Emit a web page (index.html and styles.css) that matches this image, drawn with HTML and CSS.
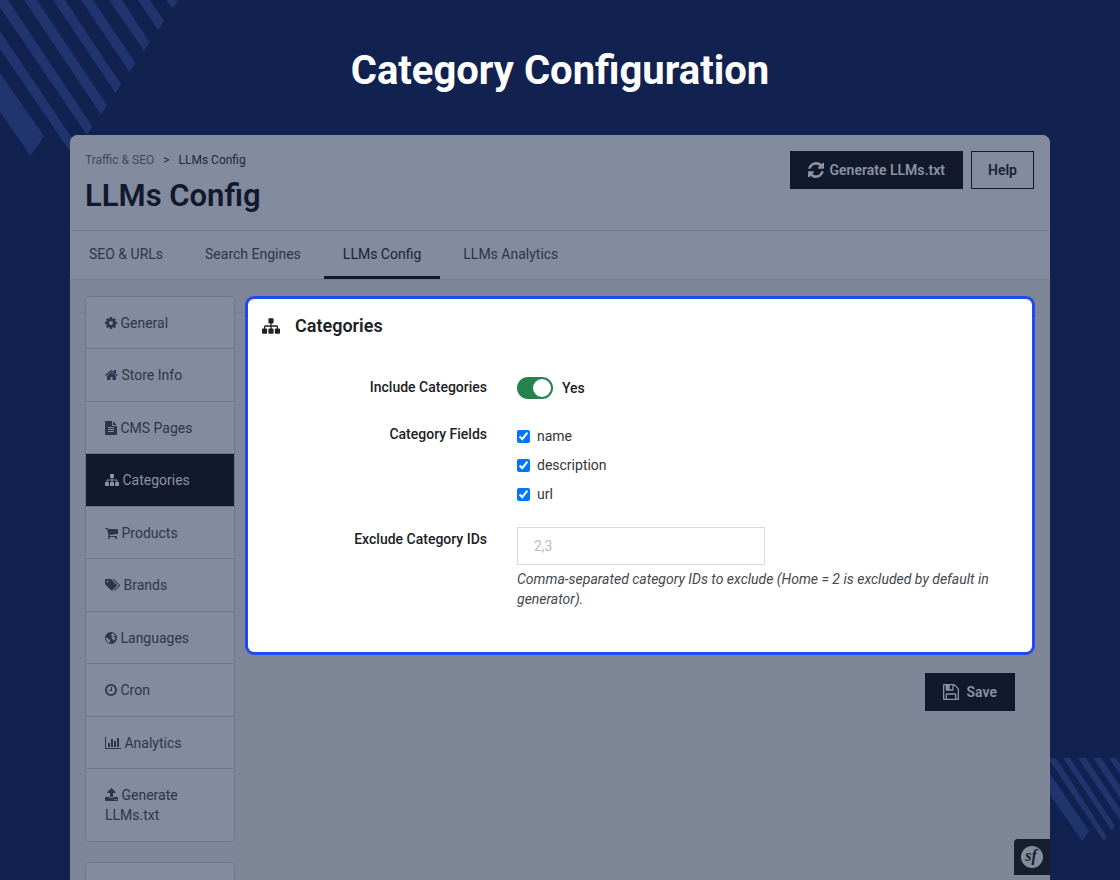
FILE: index.html
```html
<!DOCTYPE html>
<html lang="en">
<head>
    <meta charset="UTF-8">
    <meta name="viewport" content="width=device-width, initial-scale=1.0">
    <title>Category Configuration</title>
    <link rel="stylesheet" href="styles.css">
</head>
<body>
    <svg class="stripes stripes-top" width="180" height="160" viewBox="0 0 180 160" aria-hidden="true">
        <path d="M0 73L44 136 30.500 156 0 112zM0 31L78 147 73 156 0 49zM-3 0H8L92.500 126.500 87 135-3 3zM24 0H37L107 105 101 114.500zM53 0H65L121 84.500 115.500 93zM81 0H93L135.500 63 129.500 72zM109 0H122L149.500 42 144 51zM138 0H150L164 21 158 30zM166 0H178L173 9z"/>
    </svg>
    <svg class="stripes stripes-bottom" width="70" height="84" viewBox="0 0 70 84" aria-hidden="true">
        <path d="M0 16L39 73 32 83 0 37zM0 0H6L57 79 54 83 0 3zM13 0H20L65 68 62 73zM28 0H36L70 51V62zM43 0H51L70 28V40zM59 0H66L70 6V16z"/>
    </svg>

    <h1 class="page-title">Category Configuration</h1>

    <div class="window">
        <header class="header">
            <div>
                <nav class="breadcrumb">
                    <a href="#">Traffic &amp; SEO</a>
                    <span>&gt;</span>
                    <a href="#" class="current">LLMs Config</a>
                </nav>
                <h2>LLMs Config</h2>
            </div>
            <div class="toolbar">
                <button class="btn btn-dark" type="button">
                    <svg class="icon icon-btn" viewBox="128 128 1536 1536"><path d="M1639 1056q0 5-1 7-64 268-268 434.500t-478 166.500q-146 0-282.500-55t-243.500-157l-129 129q-19 19-45 19t-45-19-19-45v-448q0-26 19-45t45-19h448q26 0 45 19t19 45-19 45l-137 137q71 66 161 102t187 36q134 0 250-65t186-179q11-17 53-117 8-23 30-23h192q13 0 22.500 9.500t9.500 22.500zm25-800v448q0 26-19 45t-45 19h-448q-26 0-45-19t-19-45 19-45l138-138q-148-137-349-137-134 0-250 65t-186 179q-11 17-53 117-8 23-30 23h-199q-13 0-22.500-9.500t-9.500-22.500v-7q65-268 270-434.500t480-166.500q146 0 284 55.500t245 156.500l130-129q19-19 45-19t45 19 19 45z"/></svg>
                    Generate LLMs.txt
                </button>
                <button class="btn btn-outline" type="button">Help</button>
            </div>
        </header>

        <nav class="tabs">
            <a href="#">SEO &amp; URLs</a>
            <a href="#">Search Engines</a>
            <a href="#" class="active">LLMs Config</a>
            <a href="#">LLMs Analytics</a>
        </nav>

        <div class="content">
            <aside class="sidebar">
                <nav class="menu">
                    <a href="#"><svg class="icon" viewBox="128 0 1536 1792"><path d="M1152 896q0-106-75-181t-181-75-181 75-75 181 75 181 181 75 181-75 75-181zm512-109v222q0 12-8 23t-20 13l-185 28q-19 54-39 91 35 50 107 138 10 12 10 25t-9 23q-27 37-99 108t-94 71q-12 0-26-9l-138-108q-44 23-91 38-16 136-29 186-7 28-36 28h-222q-14 0-24.500-8.500t-11.500-21.500l-28-184q-49-16-90-37l-141 107q-10 9-25 9-14 0-25-11-126-114-165-168-7-10-7-23 0-12 8-23 15-21 51-66.500t54-70.500q-27-50-41-99l-183-27q-13-2-21-12.500t-8-23.500v-222q0-12 8-23t19-13l186-28q14-46 39-92-40-57-107-138-10-12-10-24 0-10 9-23 26-36 98.500-107.500t94.500-71.500q13 0 26 10l138 107q44-23 91-38 16-136 29-186 7-28 36-28h222q14 0 24.500 8.500t11.500 21.500l28 184q49 16 90 37l142-107q9-9 24-9 13 0 25 10 129 119 165 170 7 8 7 22 0 12-8 23-15 21-51 66.500t-54 70.500q26 50 41 98l183 28q13 2 21 12.500t8 23.500z"/></svg> General</a>
                    <a href="#"><svg class="icon" viewBox="64 0 1664 1792"><path d="M1472 992v480q0 26-19 45t-45 19h-384v-384h-256v384h-384q-26 0-45-19t-19-45v-480q0-1 .5-3t.5-3l575-474 575 474q1 2 1 6zm223-69l-62 74q-8 9-21 11h-3q-13 0-21-7l-692-577-692 577q-12 8-24 7-13-2-21-11l-62-74q-8-10-7-23.500t11-21.500l719-599q32-26 76-26t76 26l244 204v-195q0-14 9-23t23-9h192q14 0 23 9t9 23v408l219 182q10 8 11 21.500t-7 23.500z"/></svg> Store Info</a>
                    <a href="#"><svg class="icon" viewBox="128 0 1536 1792"><path d="M1596 476q14 14 28 36h-472v-472q22 14 36 28zm-476 164h544v1056q0 40-28 68t-68 28h-1344q-40 0-68-28t-28-68v-1600q0-40 28-68t68-28h800v544q0 40 28 68t68 28zm160 736v-64q0-14-9-23t-23-9h-704q-14 0-23 9t-9 23v64q0 14 9 23t23 9h704q14 0 23-9t9-23zm0-256v-64q0-14-9-23t-23-9h-704q-14 0-23 9t-9 23v64q0 14 9 23t23 9h704q14 0 23-9t9-23zm0-256v-64q0-14-9-23t-23-9h-704q-14 0-23 9t-9 23v64q0 14 9 23t23 9h704q14 0 23-9t9-23z"/></svg> CMS Pages</a>
                    <a href="#" class="active"><svg class="icon" viewBox="0 0 1792 1792"><path id="sitemap" d="M1792 1248v320q0 40-28 68t-68 28h-320q-40 0-68-28t-28-68v-320q0-40 28-68t68-28h96v-192h-512v192h96q40 0 68 28t28 68v320q0 40-28 68t-68 28h-320q-40 0-68-28t-28-68v-320q0-40 28-68t68-28h96v-192h-512v192h96q40 0 68 28t28 68v320q0 40-28 68t-68 28h-320q-40 0-68-28t-28-68v-320q0-40 28-68t68-28h96v-192q0-52 38-90t90-38h512v-192h-96q-40 0-68-28t-28-68v-320q0-40 28-68t68-28h320q40 0 68 28t28 68v320q0 40-28 68t-68 28h-96v192h512q52 0 90 38t38 90v192h96q40 0 68 28t28 68z"/></svg> Categories</a>
                    <a href="#"><svg class="icon" viewBox="64 0 1664 1792"><path d="M704 1536q0 52-38 90t-90 38-90-38-38-90 38-90 90-38 90 38 38 90zm896 0q0 52-38 90t-90 38-90-38-38-90 38-90 90-38 90 38 38 90zm128-1088v512q0 24-16.500 42.500t-40.500 21.500l-1044 122q13 60 13 70 0 16-24 64h920q26 0 45 19t19 45-19 45-45 19h-1024q-26 0-45-19t-19-45q0-11 8-31.500t16-36 21.500-40 15.500-29.500l-177-823h-204q-26 0-45-19t-19-45 19-45 45-19h256q16 0 28.500 6.500t19.500 15.500 13 24.500 8 26 5.500 29.500 4.500 26h1201q26 0 45 19t19 45z"/></svg> Products</a>
                    <a href="#"><svg class="icon" viewBox="0 0 15 14"><path fill-rule="evenodd" d="M0 2Q0 1 1 1H5.200Q6 1 6.700 1.700L11.700 6.700Q12.300 7.400 11.700 8.100L7.600 12.300Q6.900 12.900 6.200 12.300L.7 6.900Q0 6.200 0 5.400zM2.500 2.500a1 1 0 1 0 0 2 1 1 0 0 0 0-2zM7 1H8.200Q9 1 9.700 1.700L14.700 6.700Q15.300 7.400 14.700 8.100L10.600 12.300Q9.800 12.900 9.100 12.200L13.300 8.100Q13.900 7.400 13.300 6.800L8 1.500z"/></svg> Brands</a>
                    <a href="#"><svg class="icon" viewBox="0 0 12 14"><path fill-rule="evenodd" d="M6 1a6 6 0 1 0 0 12A6 6 0 0 0 6 1zM7.300 2.200Q9.500 2.800 10.600 4.700L9.300 5.200 8.600 4.800 8 5.500 9.200 6 10.400 6.200 10 8.300 9 9.600 8.100 9.300 7.900 8.200 6.800 7.600 6.600 6.300 7.200 5.200 7 4.400 6.100 4.800 5.700 4 6.700 3.200zM1.300 6.300L2.800 7.400 4.300 8.200 5.300 9.200 4.800 10.300 4.600 12Q1.500 11 1.100 7.400z"/></svg> Languages</a>
                    <a href="#"><svg class="icon" viewBox="0 0 12 14"><path fill-rule="evenodd" d="M6 1a6 6 0 1 0 0 12A6 6 0 0 0 6 1zM6 2.800a4.200 4.200 0 1 1 0 8.400 4.200 4.200 0 0 1 0-8.400zM6 4H7V7.700Q7 8 6.700 8H4.200Q4 8 4 7.700V7H6z"/></svg> Cron</a>
                    <a href="#"><svg class="icon" viewBox="0 0 16 14"><path d="M0 1H1V12H16V13H0zM3 7H5V11H3zM6 3H8V11H6zM9 5H11V11H9zM12 2H14V11H12z"/></svg> Analytics</a>
                    <a href="#" class="tall"><svg class="icon" viewBox="0 0 13 14"><path fill-rule="evenodd" d="M6.500 0L10.600 4.100Q11 5 10.200 5H8V8.500Q8 9 7.500 9H5.500Q5 9 5 8.500V5H2.800Q2 5 2.400 4.100zM.8 9H4.200Q4.600 10 5.500 10H7.500Q8.400 10 8.800 9H12.200Q13 9 13 9.800V12.200Q13 13 12.200 13H.8Q0 13 0 12.200V9.800Q0 9 .8 9zM9 11v1h1v-1zM11 11v1h1v-1z"/></svg> Generate LLMs.txt</a>
                </nav>
                <div class="menu menu-next"></div>
            </aside>

            <main class="main">
                <form>
                    <section class="panel">
                        <h3>
                            <svg class="icon icon-title" viewBox="0 0 1792 1792"><use href="#sitemap"/></svg>
                            Categories
                        </h3>
                        <div class="form-row">
                            <label class="form-label" for="include">Include Categories</label>
                            <div class="switch-field">
                                <input class="switch" type="checkbox" id="include" checked>
                                <label for="include">Yes</label>
                            </div>
                        </div>
                        <div class="form-row" role="group" aria-labelledby="fields">
                            <span class="form-label" id="fields">Category Fields</span>
                            <div class="checks">
                                <label><input type="checkbox" checked> name</label>
                                <label><input type="checkbox" checked> description</label>
                                <label><input type="checkbox" checked> url</label>
                            </div>
                        </div>
                        <div class="form-row">
                            <label class="form-label" for="exclude">Exclude Category IDs</label>
                            <div>
                                <input class="text-input" type="text" id="exclude" placeholder="2,3">
                                <p class="help">Comma-separated category IDs to exclude (Home = 2 is excluded by default in generator).</p>
                            </div>
                        </div>
                    </section>
                    <div class="actions">
                        <button class="btn btn-dark btn-save" type="submit">
                            <svg class="icon icon-btn" viewBox="128 128 1536 1536"><path d="M512 1536h768v-384h-768v384zm896 0h128v-896q0-14-10-38.500t-20-34.500l-281-281q-10-10-34-20t-39-10v416q0 40-28 68t-68 28h-576q-40 0-68-28t-28-68v-416h-128v1280h128v-416q0-40 28-68t68-28h832q40 0 68 28t28 68v416zm-384-928v-320q0-13-9.500-22.500t-22.500-9.500h-192q-13 0-22.500 9.500t-9.500 22.500v320q0 13 9.500 22.500t22.500 9.500h192q13 0 22.500-9.500t9.500-22.500zm640 32v928q0 40-28 68t-68 28h-1344q-40 0-68-28t-28-68v-1344q0-40 28-68t68-28h928q40 0 88 20t76 48l280 280q28 28 48 76t20 88z"/></svg>
                            Save
                        </button>
                    </div>
                </form>
            </main>
        </div>

        <button class="debug" type="button" aria-label="Debug toolbar">
            <svg width="22" height="22" viewBox="0 0 22 22">
                <circle cx="11" cy="11" r="11"/>
                <text x="10" y="15" text-anchor="middle">sf</text>
            </svg>
        </button>
    </div>
</body>
</html>
```
FILE: styles.css
```css
* {
    margin: 0;
    padding: 0;
    box-sizing: border-box;
}

body {
    height: 100vh;
    overflow: hidden;
    position: relative;
    display: flex;
    flex-direction: column;
    background-color: #112150;
    color: #2f364b;
    font-family: Roboto, "Liberation Sans", sans-serif;
    font-size: 14px;
    line-height: 20px;
}

a {
    color: inherit;
    text-decoration: none;
}

button, input {
    font: inherit;
}

/* Background stripes */
.stripes {
    position: absolute;
    fill: #20356d;
}

.stripes-top {
    top: 0;
    left: 0;
}

.stripes-bottom {
    right: 0;
    bottom: 38px;
}

.page-title {
    padding: 47px 0 40px;
    color: #fff;
    font-size: 40px;
    line-height: 48px;
    font-weight: 700;
    text-align: center;
}

/* Window */
.window {
    flex: 1;
    min-height: 0;
    margin: 0 70px;
    position: relative;
    display: flex;
    flex-direction: column;
    overflow: hidden;
    border-radius: 8px 8px 0 0;
    background-color: #7e8698;
}

.header {
    flex-shrink: 0;
    display: flex;
    justify-content: space-between;
    align-items: flex-start;
    height: 96px;
    padding: 15px 16px 0 15px;
    background-color: #838b9e;
    border-bottom: 1px solid #727a8e;
}

.breadcrumb {
    display: flex;
    gap: 9px;
    font-size: 12px;
    color: #22293d;
}

.breadcrumb a:first-child {
    color: #41485c;
}

.header h2 {
    margin-top: 6px;
    color: #12192c;
    font-size: 31px;
    line-height: 40px;
    font-weight: 600;
}

.toolbar {
    display: flex;
    gap: 8px;
    padding-top: 1px;
}

.btn {
    display: flex;
    align-items: center;
    gap: 6px;
    height: 38px;
    padding: 0 17px;
    border: 1px solid #12192c;
    font-weight: 600;
    cursor: pointer;
}

.btn-dark {
    background-color: #12192c;
    color: #8b92a4;
}

.btn-outline {
    padding: 0 16px;
    background-color: transparent;
    color: #1c2337;
}

.btn-save {
    gap: 8px;
}

.icon {
    width: auto;
    height: 14px;
    fill: currentColor;
    vertical-align: -2px;
}

.icon-btn {
    height: 16px;
}

.icon-title {
    height: 18px;
}

/* Tabs */
.tabs {
    flex-shrink: 0;
    display: flex;
    gap: 4px;
    height: 49px;
    background-color: #838b9e;
    border-bottom: 1px solid #747c90;
}

.tabs a {
    padding: 13px 19px 0;
    border-bottom: 3px solid transparent;
}

.tabs .active {
    color: #1c2337;
    border-bottom-color: #12192c;
}

/* Content */
.content {
    position: relative;
    display: flex;
    gap: 10px;
    padding: 16px 15px 0;
}

.content::before {
    content: "";
    position: absolute;
    top: 32px;
    left: 10px;
    right: 10px;
    border-top: 1px solid #757d90;
}

.sidebar {
    flex: 0 0 150px;
    z-index: 1;
}

.menu {
    display: flex;
    flex-direction: column;
    min-height: 546px;
    border: 1px solid #6f778b;
    border-radius: 4px;
    background-color: #838b9e;
}

.menu a {
    flex: 1 0 52px;
    padding: 16px 19px 15px;
    border-bottom: 1px solid #6f778b;
}

.menu a.tall {
    flex: 0 0 72px;
    border-bottom: 0;
}

.menu .active {
    background-color: #12192c;
    color: #8b92a4;
}

.menu-next {
    margin-top: 20px;
}

.main {
    flex: 1;
    min-width: 0;
    z-index: 1;
}

.panel {
    min-height: 359px;
    padding: 15px 14px;
    border: 3px solid #2149f5;
    border-radius: 9px;
    background-color: #fff;
    color: #202124;
}

.panel h3 {
    display: flex;
    align-items: center;
    gap: 15px;
    margin-bottom: 37px;
    font-size: 18px;
    line-height: 24px;
    font-weight: 600;
}

.form-row {
    display: grid;
    grid-template-columns: 225px 1fr;
    column-gap: 30px;
    margin-bottom: 23px;
}

.form-label {
    padding-top: 2px;
    font-weight: 500;
    text-align: right;
}

.switch-field {
    display: flex;
    align-items: center;
    gap: 9px;
    padding-top: 2px;
    font-weight: 500;
}

.switch {
    appearance: none;
    width: 36px;
    height: 22px;
    padding: 2px;
    border-radius: 11px;
    background-color: #24834c;
    cursor: pointer;
}

.switch::before {
    content: "";
    display: block;
    width: 18px;
    height: 18px;
    border-radius: 50%;
    background-color: #fff;
}

.switch:checked::before {
    margin-left: auto;
}

.checks {
    display: flex;
    flex-direction: column;
    gap: 9px;
    padding-top: 4px;
    color: #33363a;
}

.checks label {
    display: flex;
    align-items: center;
    gap: 7px;
}

.checks input {
    width: 13px;
    height: 13px;
    accent-color: #0075ff;
}

.text-input {
    display: block;
    width: 248px;
    height: 38px;
    padding: 0 16px;
    border: 1px solid #d9d9d9;
    background-color: #fff;
}

.text-input::placeholder {
    color: #bbb;
}

.help {
    margin-top: 4px;
    color: #45474b;
    font-style: italic;
}

.actions {
    display: flex;
    justify-content: flex-end;
    padding: 18px 20px 0;
}

/* Debug toolbar button */
.debug {
    position: absolute;
    right: 0;
    bottom: 5px;
    z-index: 2;
    display: flex;
    align-items: center;
    justify-content: center;
    width: 36px;
    height: 36px;
    border: 0;
    border-radius: 4px 0 0 0;
    background-color: #171e30;
}

.debug circle {
    fill: #858c9b;
}

.debug text {
    fill: #171e30;
    font-family: "Liberation Serif", serif;
    font-size: 16px;
    font-style: italic;
    font-weight: bold;
}
```
